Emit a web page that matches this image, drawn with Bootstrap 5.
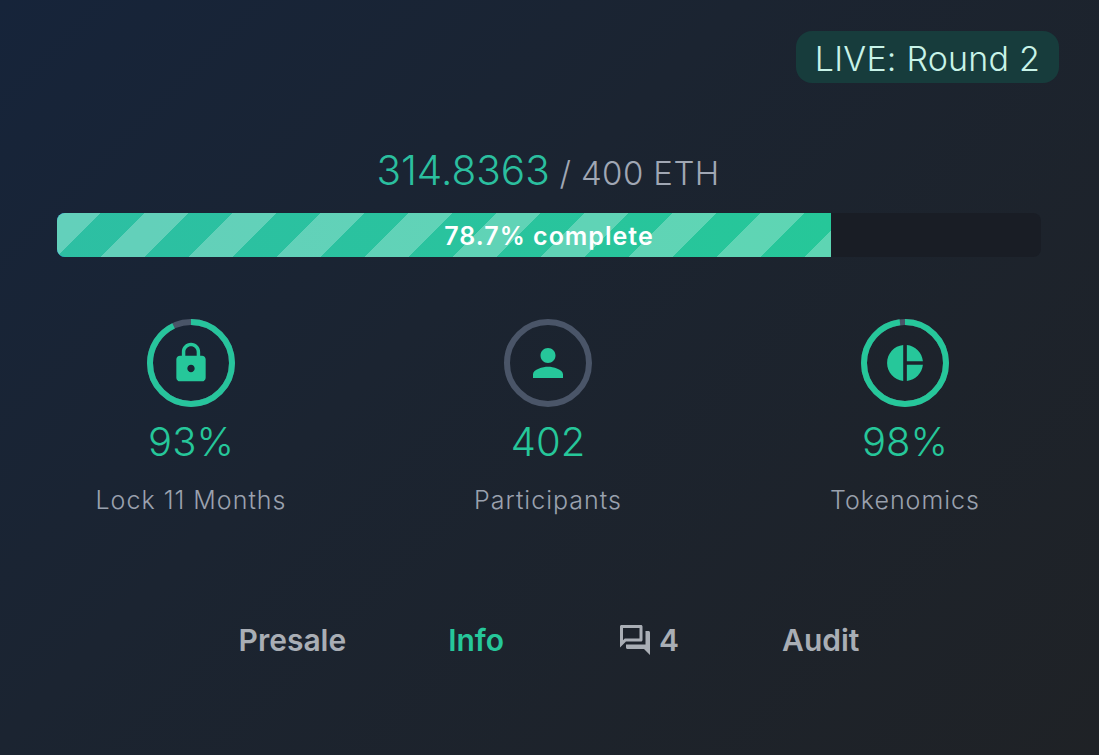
<!DOCTYPE html>
<html lang="en">
<head>
    <meta charset="UTF-8">
    <meta name="viewport" content="width=device-width, initial-scale=1.0">
    <title>Presale</title>
    <link rel="stylesheet" href="https://cdn.jsdelivr.net/npm/bootstrap@5.3.0/dist/css/bootstrap.min.css">
    <style>
        html, body { height: 100%; }
        body {
            background: linear-gradient(135deg, #16243a 0%, #1b2431 40%, #1f2226 100%);
            font-family: "Inter", "Noto Sans", sans-serif;
            font-weight: 300;
            color: #a0a7b4;
            overflow: hidden;
        }
        .presale-wrap { height: 755px; padding: 31px 15.5px 0 12.5px; }
        .live-pill {
            background: #173c3c;
            color: #c8f3e8;
            font-size: 34px;
            line-height: 55px;
            height: 52px;
            padding: 0 19px;
            border-radius: 16px;
            margin-right: 24.5px;
            letter-spacing: .2px;
        }
        .raised { margin-top: 62px; height: 52px; line-height: 52px; font-size: 33px; letter-spacing: .4px; text-align: center; }
        .raised b { font-weight: 300; font-size: 40.5px; color: #2bbf9f; letter-spacing: 0; }
        .sale-bar { margin: 16px 42.5px 0 44.5px; height: 44px; background: #191d25; border-radius: 8px; font-size: 25px; }
        .sale-bar .progress-bar {
            background-image:
                linear-gradient(135deg,
                    rgba(255,255,255,.26) 25%, transparent 25%, transparent 50%,
                    rgba(255,255,255,.26) 50%, rgba(255,255,255,.26) 75%, transparent 75%, transparent),
                linear-gradient(90deg, #2dbfa3, #26c799);
            background-size: 88px 88px, 100% 100%;
        }
        .bar-text { color: #fff; font-weight: 600; line-height: 46px; letter-spacing: 1px; }
        .stat-row { margin-top: 62px; }
        .ring-box { width: 88px; height: 88px; }
        .ring-box svg.icon-in { fill: #26c79a; }
        .stat-num { color: #26c79a; font-size: 40px; line-height: 50px; margin-top: 10px; }
        .stat-label { font-size: 25px; line-height: 32px; margin-top: 17px; color: #9aa1ae; letter-spacing: 1px; }
        .tab-row { margin: 100px 0 0 2px; gap: 102px; font-size: 30px; font-weight: 600; }
        .tab-row a { color: #a9aeb5; text-decoration: none; line-height: 48px; }
        .tab-row a.on { color: #26c79a; }
        .tab-row a.chat-link { margin-left: 11px; gap: 6px; }
        .tab-row a.audit-link { margin-left: 1px; }
        .tab-row svg { fill: #a9aeb5; }
    </style>
</head>
<body>
    <div class="presale-wrap">
        <div class="d-flex justify-content-end">
            <div class="live-pill">LIVE: Round 2</div>
        </div>

        <div class="raised"><b>314.8363</b> / 400 ETH</div>

        <div class="progress sale-bar position-relative">
            <div class="progress-bar" role="progressbar" style="width: 78.7%"></div>
            <span class="bar-text position-absolute top-0 start-0 w-100 text-center">78.7% complete</span>
        </div>

        <div class="row g-0 stat-row text-center">
            <div class="col-4 d-flex flex-column align-items-center">
                <div class="ring-box position-relative">
                    <svg width="88" height="88" viewBox="0 0 88 88">
                        <circle cx="44" cy="44" r="41" fill="none" stroke="#4a5568" stroke-width="6"/>
                        <circle cx="44" cy="44" r="41" fill="none" stroke="#27c49c" stroke-width="6" pathLength="100" stroke-dasharray="93 100" transform="rotate(-90 44 44)"/>
                    </svg>
                    <svg class="icon-in position-absolute top-50 start-50 translate-middle" width="44" height="44" viewBox="0 0 24 24"><path d="M18 8h-1V6c0-2.76-2.24-5-5-5S7 3.24 7 6v2H6c-1.1 0-2 .9-2 2v10c0 1.1.9 2 2 2h12c1.1 0 2-.9 2-2V10c0-1.1-.9-2-2-2zm-6 9c-1.1 0-2-.9-2-2s.9-2 2-2 2 .9 2 2-.9 2-2 2zm3.1-9H8.9V6c0-1.71 1.39-3.1 3.1-3.1 1.71 0 3.1 1.39 3.1 3.1v2z"/></svg>
                </div>
                <div class="stat-num">93%</div>
                <div class="stat-label">Lock 11 Months</div>
            </div>
            <div class="col-4 d-flex flex-column align-items-center">
                <div class="ring-box position-relative">
                    <svg width="88" height="88" viewBox="0 0 88 88">
                        <circle cx="44" cy="44" r="41" fill="none" stroke="#4a5568" stroke-width="6"/>
                    </svg>
                    <svg class="icon-in position-absolute top-50 start-50 translate-middle" width="45" height="45" viewBox="0 0 24 24"><path d="M12 12c2.21 0 4-1.79 4-4s-1.79-4-4-4-4 1.79-4 4 1.79 4 4 4zm0 2c-2.67 0-8 1.34-8 4v2h16v-2c0-2.66-5.33-4-8-4z"/></svg>
                </div>
                <div class="stat-num">402</div>
                <div class="stat-label">Participants</div>
            </div>
            <div class="col-4 d-flex flex-column align-items-center">
                <div class="ring-box position-relative">
                    <svg width="88" height="88" viewBox="0 0 88 88">
                        <circle cx="44" cy="44" r="41" fill="none" stroke="#4a5568" stroke-width="6"/>
                        <circle cx="44" cy="44" r="41" fill="none" stroke="#26c79a" stroke-width="6" pathLength="100" stroke-dasharray="98 100" transform="rotate(-90 44 44)"/>
                    </svg>
                    <svg class="icon-in position-absolute top-50 start-50 translate-middle" width="43" height="43" viewBox="0 0 24 24"><path d="M11 2v20c-5.07-.5-9-4.79-9-10s3.93-9.5 9-10zm2.03 0v8.99H22c-.47-4.74-4.24-8.52-8.97-8.99zm0 11.01V22c4.74-.47 8.5-4.25 8.97-8.99h-8.97z"/></svg>
                </div>
                <div class="stat-num">98%</div>
                <div class="stat-label">Tokenomics</div>
            </div>
        </div>

        <div class="tab-row d-flex justify-content-center align-items-center">
            <a href="#">Presale</a>
            <a href="#" class="on">Info</a>
            <a href="#" class="chat-link d-flex align-items-center"><svg width="36" height="36" viewBox="0 0 24 24"><path d="M15 4v7H5.17L4 12.17V4h11m1-2H3c-.55 0-1 .45-1 1v14l4-4h10c.55 0 1-.45 1-1V3c0-.55-.45-1-1-1zm5 4h-2v9H6v2c0 .55.45 1 1 1h11l4 4V7c0-.55-.45-1-1-1z"/></svg>4</a>
            <a href="#" class="audit-link">Audit</a>
        </div>
    </div>
</body>
</html>
